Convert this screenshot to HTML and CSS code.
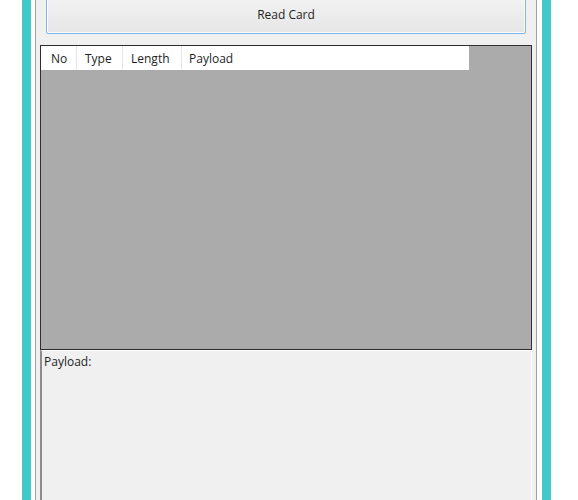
FILE: index.html
```html
<!DOCTYPE html>
<html lang="en">

<head>
    <meta charset="UTF-8">
    <title>NFC Reader</title>
    <link rel="stylesheet" href="styles.css">
</head>

<body>
    <!-- Ventana principal -->
    <div class="window">
        <div class="window-inner">
            <div class="client">
                <button class="read-button">Read Card</button>

                <div class="list-view">
                    <div class="list-header">
                        <div class="col col-no">No</div>
                        <div class="col col-type">Type</div>
                        <div class="col col-length">Length</div>
                        <div class="col col-payload">Payload</div>
                    </div>
                </div>

                <div class="payload-box">Payload:</div>
            </div>
        </div>
    </div>
</body>

</html>
```

FILE: styles.css
```css
/* Estilos generales */
body {
    margin: 0;
    padding: 0;
    background-color: #fff;
    font-family: 'Open Sans', 'Noto Sans', sans-serif;
    font-size: 12px;
    color: #1e1e1e;
    overflow: hidden;
}

/* Marco de la ventana */
.window {
    width: 511px;
    margin-left: 22px;
    margin-top: -20px;
    border-left: 9px solid #42c8c8;
    border-right: 9px solid #42c8c8;
    background-color: #fff;
}

.window-inner {
    margin: 0 5px 0 4px;
    border-left: 1px solid #a0a0a0;
    border-right: 1px solid #a0a0a0;
}

.client {
    background-color: #f0f0f0;
    padding: 14px 4px 0 4px;
    height: 506px;
}

/* Botón */
.read-button {
    display: block;
    width: 480px;
    height: 40px;
    margin: 0 6px;
    border: 1px solid #7eb4ea;
    border-radius: 2px;
    background: linear-gradient(#f3f3f3, #e6e6e6);
    box-shadow: inset 0 0 0 1px #fcfcfc;
    font-family: inherit;
    font-size: 12px;
    color: #1e1e1e;
    padding: 0;
}

/* Lista */
.list-view {
    margin-top: 11px;
    height: 303px;
    border: 1px solid #2e2e2e;
    background-color: #ababab;
}

.list-header {
    display: flex;
    width: 428px;
    height: 24px;
    background-color: #fff;
}

.col {
    display: flex;
    align-items: center;
    padding-left: 8px;
    border-right: 1px solid #e5e5e5;
    box-sizing: border-box;
}

.col-no {
    width: 36px;
    padding-left: 10px;
}

.col-type {
    width: 46px;
}

.col-length {
    width: 59px;
}

.col-payload {
    width: 287px;
    padding-left: 7px;
    border-right: none;
}

/* Caja de payload */
.payload-box {
    height: 147px;
    border-left: 2px solid #8c8c8c;
    border-top: 1px solid #fff;
    border-right: 1px solid #fff;
    padding: 2px 0 0 2px;
    background-color: #f0f0f0;
}
```
